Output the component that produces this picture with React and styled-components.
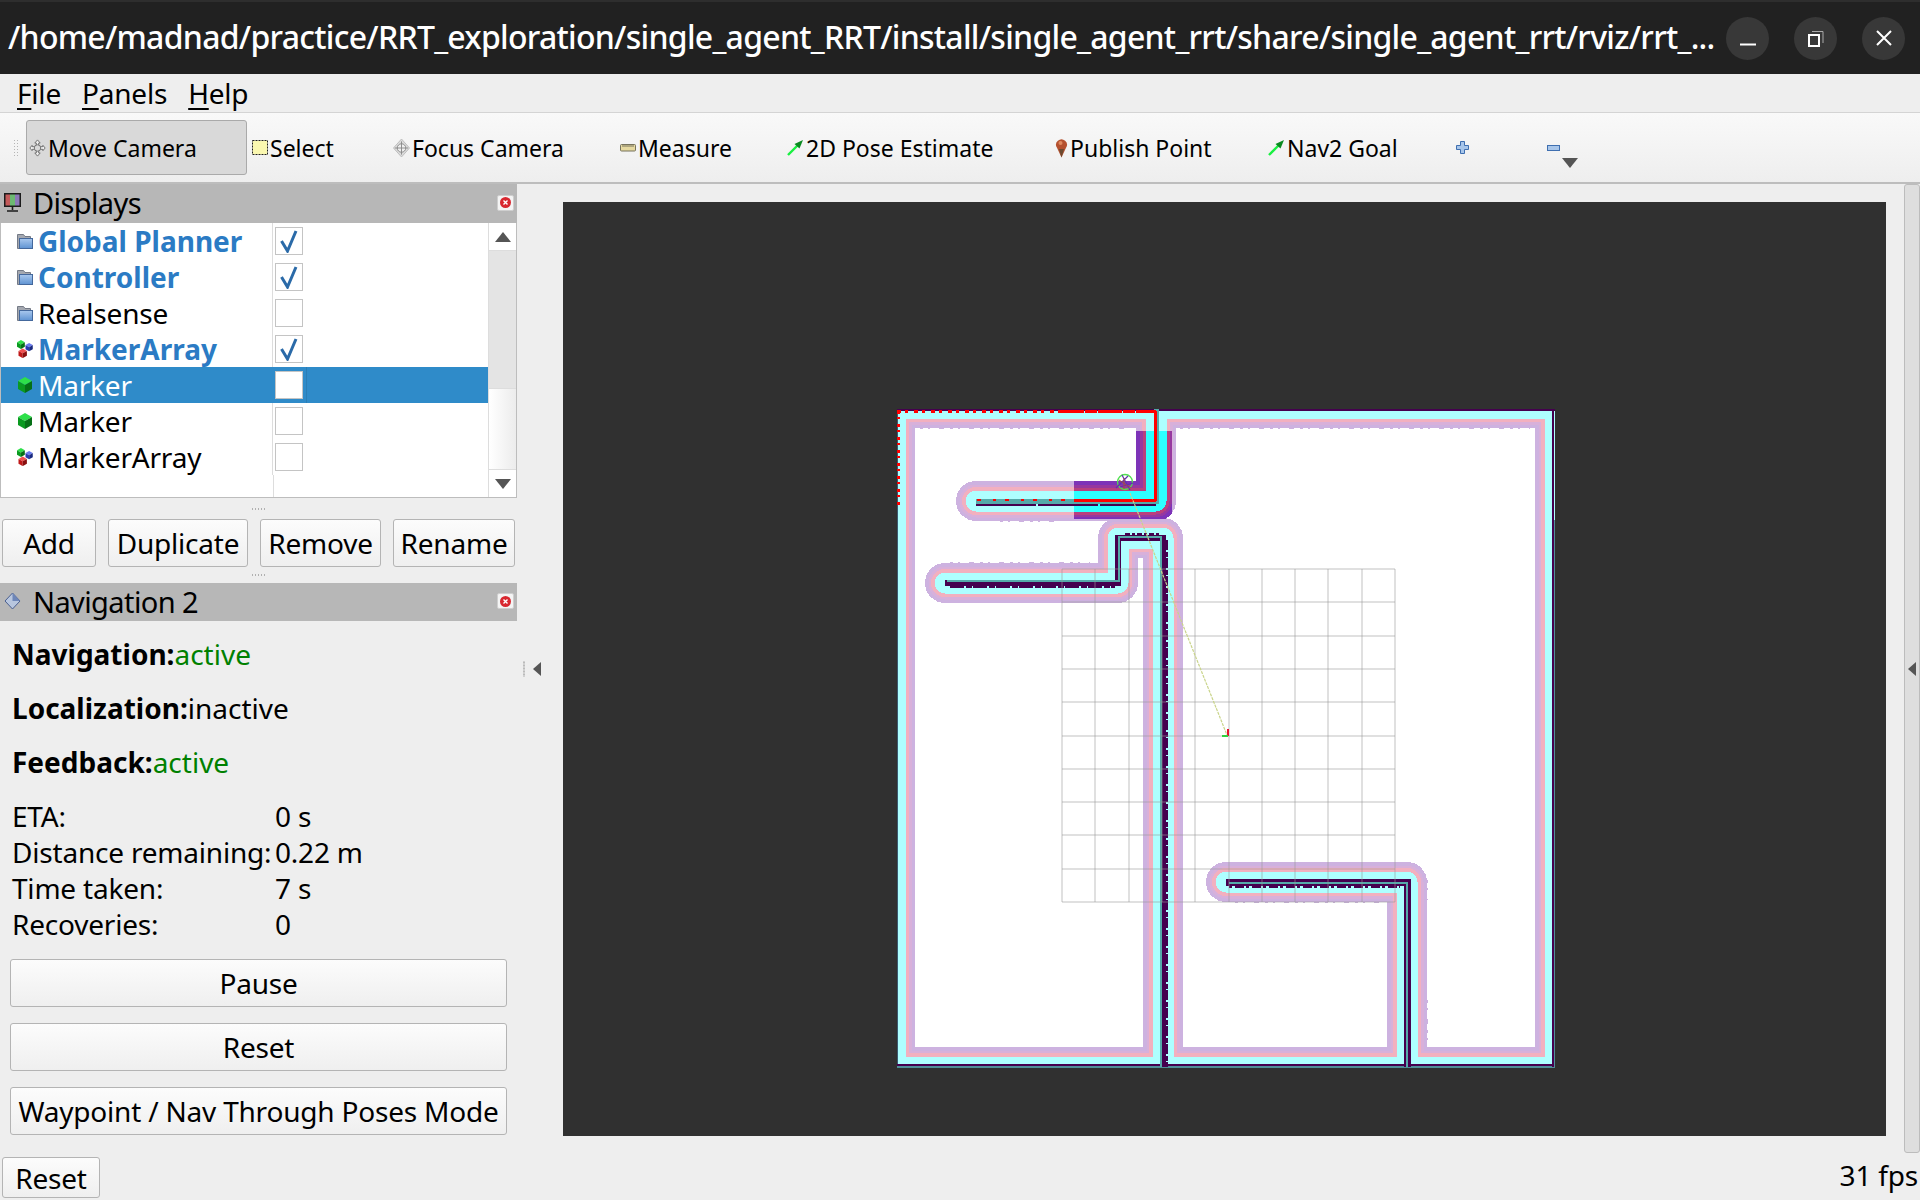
import React from "react";
import styled, { createGlobalStyle } from "styled-components";

const FONT = `"Noto Sans", "Open Sans", sans-serif`;

const Global = createGlobalStyle`
  html, body { margin: 0; padding: 0; background: #eeeeee; }
  body { font-family: ${FONT}; color: #000; overflow: hidden; }
  * { box-sizing: border-box; }
`;

const Window = styled.div`
  width: 1920px;
  height: 1200px;
  display: flex;
  flex-direction: column;
  background: #eeeeee;
  font-size: 28px;
  letter-spacing: -0.2px;
`;

const TitleBar = styled.div`
  height: 74px;
  flex: none;
  background: #212121;
  border-top: 2px solid #2e2e2e;
  display: flex;
  align-items: center;
  padding: 0 15px 0 8px;
`;
const TitleText = styled.div`
  flex: 1;
  margin-top: -4px;
  color: #fff;
  font-size: 32px;
  font-weight: 500;
  letter-spacing: -0.73px;
  white-space: nowrap;
`;
const WinButtons = styled.div`
  display: flex;
  gap: 25px;
`;
const WinButton = styled.div`
  width: 43px;
  height: 43px;
  border-radius: 50%;
  background: #383838;
  display: flex;
  align-items: center;
  justify-content: center;
`;

const MenuBar = styled.div`
  height: 39px;
  flex: none;
  display: flex;
  align-items: center;
  gap: 21px;
  padding: 0 16px 0 17px;
  border-bottom: 1px solid #d4d4d4;
`;
const MenuItem = styled.span`
  u { text-underline-offset: 4px; text-decoration-thickness: 2px; }
`;

const ToolBar = styled.div`
  height: 71px;
  flex: none;
  display: flex;
  align-items: center;
  padding-left: 13px;
  background: linear-gradient(#f9f9f9, #eeeeee);
  border-bottom: 2px solid #bdbdbd;
`;
const Grip = styled.div`
  width: 5px;
  height: 18px;
  margin-right: 8px;
  background-image: radial-gradient(#b5b5b5 0.8px, transparent 1px);
  background-size: 3px 3px;
`;
const Tool = styled.div`
  width: ${(p) => p.$w}px;
  height: 55px;
  flex: none;
  display: flex;
  align-items: center;
  gap: 2px;
  padding-left: ${(p) => (p.$active ? 2 : 4)}px;
  border: 1px solid ${(p) => (p.$active ? "#aaaaaa" : "transparent")};
  border-radius: 3px;
  background: ${(p) => (p.$active ? "#d9d9d9" : "transparent")};
  font-size: 23px;
  letter-spacing: 0;
  white-space: nowrap;
`;
const MoreArrow = styled.div`
  width: 0;
  height: 0;
  border-left: 8px solid transparent;
  border-right: 8px solid transparent;
  border-top: 10px solid #555;
  margin-top: 30px;
  margin-left: -4px;
`;

const Main = styled.div`
  flex: 1;
  min-height: 0;
  display: flex;
`;
const Dock = styled.div`
  width: 517px;
  flex: none;
  display: flex;
  flex-direction: column;
`;
const DockTitle = styled.div`
  height: ${(p) => p.$h}px;
  flex: none;
  background: #b7b7b7;
  display: flex;
  align-items: center;
  padding: 0 3px 2px 4px;
  font-size: 29px;
  letter-spacing: -0.6px;
`;
const DockTitleText = styled.span`
  flex: 1;
  margin-left: 12px;
`;
const CloseBtn = styled.div`
  width: 17px;
  height: 16px;
  background: #f4f4f4;
  border: 1px solid #cfcfcf;
  border-radius: 2px;
  display: flex;
  align-items: center;
  justify-content: center;
`;

const ListBox = styled.div`
  height: 275px;
  flex: none;
  display: flex;
  background: #fff;
  border: 1px solid #bdbdbd;
  border-top: none;
`;
const Rows = styled.div`
  flex: 1;
  position: relative;
`;
const Row = styled.div`
  height: 36px;
  display: flex;
  align-items: center;
  background: ${(p) => (p.$selected ? "#2f8bc9" : "transparent")};
  color: ${(p) => (p.$selected ? "#fff" : p.$on ? "#2b7bc4" : "#000")};
  font-weight: ${(p) => (p.$on ? 700 : 400)};
  letter-spacing: ${(p) => (p.$on ? "0" : "-0.2px")};
`;
const NameCell = styled.div`
  width: 272px;
  height: 100%;
  flex: none;
  display: flex;
  align-items: center;
  gap: 4px;
  padding-left: 15px;
  border-right: 1px solid ${(p) => (p.$selected ? "#2f8bc9" : "#dddddd")};
`;
const IconBox = styled.span`
  width: 18px;
  height: 18px;
  flex: none;
  display: flex;
  align-items: center;
  justify-content: center;
`;
const CheckCell = styled.div`
  width: 34px;
  height: 100%;
  flex: none;
  display: flex;
  align-items: center;
  padding-left: 2px;
  border-right: 1px solid ${(p) => (p.$selected ? "#2a7eb6" : "transparent")};
`;
const Check = styled.div`
  width: 28px;
  height: 28px;
  background: #fff;
  border: 1px solid #c4c4c4;
  display: flex;
  align-items: center;
  justify-content: center;
`;
const ColumnRule = styled.div`
  position: absolute;
  left: 272px;
  top: 252px;
  bottom: 0;
  width: 1px;
  background: #dddddd;
`;
const VScroll = styled.div`
  width: 28px;
  flex: none;
  display: flex;
  flex-direction: column;
  border-left: 1px solid #dddddd;
`;
const ScrollBtn = styled.div`
  height: 27px;
  flex: none;
  display: flex;
  align-items: center;
  justify-content: center;
  background: #fff;
`;
const ArrowUp = styled.div`
  width: 0;
  height: 0;
  border-left: 8px solid transparent;
  border-right: 8px solid transparent;
  border-${(p) => (p.$down ? "top" : "bottom")}: 10px solid #555;
`;
const ScrollThumb = styled.div`
  height: 139px;
  flex: none;
  background: #e4e4e4;
  border-top: 1px solid #dddddd;
  border-bottom: 1px solid #dddddd;
`;
const ScrollRest = styled.div`
  flex: 1;
  background: linear-gradient(90deg, #ffffff, #ececec);
  border-bottom: 1px solid #dddddd;
`;

const SplitDots = styled.div`
  height: ${(p) => p.$h}px;
  flex: none;
  display: flex;
  align-items: center;
  justify-content: center;
  &::after {
    content: "";
    width: 16px;
    height: 2px;
    background-image: radial-gradient(#b0b0b0 0.8px, transparent 1px);
    background-size: 3px 2px;
  }
`;
const ActionRow = styled.div`
  display: flex;
  padding: 0 2px 0 2px;
  gap: 12px;
`;
const Btn = styled.div`
  height: ${(p) => p.$h || 48}px;
  width: ${(p) => (p.$w ? `${p.$w}px` : "auto")};
  flex: none;
  display: flex;
  align-items: center;
  justify-content: center;
  white-space: nowrap;
  border: 1px solid #b4b4b4;
  border-radius: 3px;
  background: linear-gradient(#fcfcfc, #efefef);
`;

const NavBody = styled.div`
  flex: 1;
  padding: 6px 10px 0 12px;
  display: flex;
  flex-direction: column;
`;
const StatusLine = styled.div`
  height: 54px;
  display: flex;
  align-items: center;
  letter-spacing: 0;
  b { font-weight: 700; }
`;
const Active = styled.span`
  color: ${(p) => (p.$on ? "#008000" : "#000")};
`;
const InfoTable = styled.div`
  margin-top: 9px;
  display: grid;
  grid-template-columns: 263px 1fr;
  grid-auto-rows: 36px;
  align-items: center;
  white-space: nowrap;
`;
const BigButtons = styled.div`
  margin-top: 17px;
  margin-left: -2px;
  width: 497px;
  display: flex;
  flex-direction: column;
  gap: 16px;
`;

const ViewportColumn = styled.div`
  flex: 1;
  display: flex;
  align-items: center;
  min-width: 0;
`;
const Collapse = styled.div`
  width: 46px;
  flex: none;
  height: 100%;
  display: flex;
  align-items: center;
  padding-left: 6px;
  gap: 8px;
`;
const DotsV = styled.div`
  width: 2px;
  height: 16px;
  background-image: radial-gradient(#bbbbbb 0.7px, transparent 1px);
  background-size: 2px 3px;
`;
const ArrowLeft = styled.div`
  width: 0;
  height: 0;
  border-top: 7px solid transparent;
  border-bottom: 7px solid transparent;
  border-right: 8px solid #555;
`;
const Viewport = styled.div`
  width: 1323px;
  height: 934px;
  flex: none;
  margin-top: 18px;
  align-self: flex-start;
  background: #303030;
  svg { display: block; }
`;
const RightBar = styled.div`
  width: 16px;
  flex: none;
  margin-left: 18px;
  align-self: stretch;
  background: #dedede;
  border: 1px solid #bcbcbc;
  border-radius: 3px;
  display: flex;
  align-items: center;
  justify-content: center;
`;

const StatusBar = styled.div`
  height: 47px;
  flex: none;
  display: flex;
  align-items: flex-start;
  justify-content: space-between;
  padding: 4px 2px 0 2px;
`;
const Fps = styled.span`
  line-height: 36px;
`;

/* toolbar + tree icons */
const MoveIcon = () => (
  <svg width="17" height="18" viewBox="0 0 18 20" fill="none" stroke="#6a6a6a" strokeWidth="1">
    <path d="M9 1 L12 4.5 H10.3 V8.5 H15 V7 L17.5 10 L15 13 V11.5 H10.3 V15.5 H12 L9 19 L6 15.5 H7.7 V11.5 H3 V13 L.5 10 L3 7 V8.5 H7.7 V4.5 H6 Z" fill="#f0f0f0" />
    <circle cx="9" cy="10" r="3.6" fill="#d8d8d8" />
  </svg>
);
const SelectIcon = () => (
  <svg width="16" height="15" viewBox="0 0 16 15">
    <rect x=".5" y=".5" width="15" height="14" fill="#fbf8b0" stroke="#222" strokeDasharray="2 1" />
  </svg>
);
const FocusIcon = () => (
  <svg width="17" height="20" viewBox="0 0 18 20" fill="none" stroke="#8a8a8a">
    <path d="M9 .5 L17.5 10 L9 19.5 L.5 10 Z" fill="#dcdcdc" stroke="#bbb" />
    <circle cx="9" cy="10" r="4.5" fill="#eee" />
    <path d="M9 3 V17 M2 10 H16" />
  </svg>
);
const RulerIcon = () => (
  <svg width="16" height="8" viewBox="0 0 16 8">
    <rect x=".5" y=".5" width="15" height="6.5" rx="1" fill="#e6d9a0" stroke="#77735c" />
    <path d="M3 1v2M5 1v2M7 1v2M9 1v2M11 1v2M13 1v2" stroke="#77735c" />
  </svg>
);
const GreenArrow = () => (
  <svg width="17" height="16" viewBox="0 0 17 16">
    <path d="M1 15 L11 5" stroke="#18f040" strokeWidth="2.4" />
    <path d="M7.5 4 L16 0 L12.5 8.5 Z" fill="#0a8a20" />
  </svg>
);
const PinIcon = () => (
  <svg width="13" height="20" viewBox="0 0 12 20">
    <path d="M6 19.5 L1.6 10 A5.4 5.4 0 1 1 10.4 10 Z" fill="#b5512f" />
    <path d="M6 19.5 L3.5 11 H8.5 Z" fill="#6a4a30" />
    <circle cx="5" cy="5" r="2" fill="#e08a60" />
  </svg>
);
const PlusIcon = () => (
  <svg width="13" height="13" viewBox="0 0 13 13">
    <path d="M4.5 .5 H8.5 V4.5 H12.5 V8.5 H8.5 V12.5 H4.5 V8.5 H.5 V4.5 H4.5 Z" fill="#a8c6ea" stroke="#3f6fb0" />
  </svg>
);
const MinusIcon = () => (
  <svg width="13" height="6" viewBox="0 0 13 6">
    <rect x=".5" y=".5" width="12" height="5" fill="#a8c6ea" stroke="#3f6fb0" />
  </svg>
);
const MonitorIcon = () => (
  <svg width="17" height="19" viewBox="0 0 17 19">
    <rect x="0" y="0" width="17" height="14" fill="#1c1c1c" />
    <rect x="1.5" y="1.5" width="4.5" height="11" fill="#c45a5a" />
    <rect x="6" y="1.5" width="5" height="11" fill="#6cb872" />
    <rect x="11" y="1.5" width="4.5" height="11" fill="#8b78b8" />
    <path d="M8.5 14v3M3 18h11" stroke="#1c1c1c" strokeWidth="1.6" />
  </svg>
);
const FolderIcon = () => (
  <svg width="16" height="16" viewBox="0 0 16 16">
    <defs>
      <linearGradient id="fold" x1="0" x2="0" y1="0" y2="1">
        <stop offset="0" stopColor="#a9c8ee" />
        <stop offset="1" stopColor="#5f93d2" />
      </linearGradient>
    </defs>
    <path d="M.5 1.5 H6.5 L8 3.5 H13.5 V15.5 H.5 Z" fill="#a4a8b0" stroke="#747a86" />
    <rect x="2.5" y="5.5" width="13" height="10" fill="url(#fold)" stroke="#44689c" />
  </svg>
);
const Cube = ({ x = 0, y = 0, s = 1, top = "#2ee04a", l = "#0a9a20", r = "#067016" }) => (
  <g transform={`translate(${x} ${y}) scale(${s})`}>
    <path d="M7 0 L14 4 L7 8 L0 4 Z" fill={top} />
    <path d="M0 4 L7 8 V16 L0 12 Z" fill={l} />
    <path d="M14 4 L7 8 V16 L14 12 Z" fill={r} />
  </g>
);
const CubeIcon = () => (
  <svg width="14" height="16" viewBox="0 0 14 16"><Cube /></svg>
);
const CubesIcon = () => (
  <svg width="16" height="18" viewBox="0 0 16 18">
    <Cube x="0" y="0" s=".56" />
    <Cube x="8.5" y="3" s=".52" top="#6a7cf0" l="#2a3ab0" r="#1a2a80" />
    <Cube x="1.5" y="8.5" s=".6" top="#f05050" l="#c01818" r="#8a1010" />
  </svg>
);
const NavIcon = () => (
  <svg width="17" height="18" viewBox="0 0 17 18">
    <path d="M8.5 1 L16 9 L8.5 17 L1 9 Z" fill="#b8c6de" stroke="#4a5f90" />
    <path d="M8.5 1 L16 9 L8.5 9 Z" fill="#6e86b8" />
  </svg>
);
const RedClose = () => (
  <svg width="11" height="11" viewBox="0 0 11 11">
    <circle cx="5.5" cy="5.5" r="5.5" fill="#d8272f" />
    <path d="M3.5 3.5l4 4M7.5 3.5l-4 4" stroke="#fff" strokeWidth="1.4" />
  </svg>
);
const Tick = () => (
  <svg width="18" height="23" viewBox="0 0 18 23" fill="none">
    <path d="M1.5 11 L7.5 21 L16 1" stroke="#2a6aa8" strokeWidth="3" />
  </svg>
);

/* costmap drawing, coordinates follow the 1920 wide window */
const OUTER = "M895 408 H1555 V1067 H895 Z";
const WALL_A = "M1156 409 V501 H976";
const WALL_B = "M1163 1067 V538 H1118 V583 H945";
const WALL_C = "M1407 1067 V882 H1226";
const WALLS = [OUTER, WALL_A, WALL_B, WALL_C];

const LAYERS = [
  { w: 40, c: "#cdb2e0" },
  { w: 33, c: "#d8b0da" },
  { w: 28, c: "#f2b0bf" },
  { w: 21, c: "#aeffff" },
];
const LOCAL_LAYERS = [
  { w: 40, c: "#7d33b8" },
  { w: 32, c: "#96389f" },
  { w: 27, c: "#b8407e" },
  { w: 21, c: "#2dffff" },
];

// little notches on the inflation edge, the map is not perfectly clean
const EDGE_BUMPS = [
  "M920 428 H1130",
  "M1180 428 H1530",
  "M1235 902 H1385",
  "M950 563 H1090",
  "M1000 521 H1060",
  "M1427 1000 V1047",
  "M1427 880 V900",
];

const gridLines = Array.from({ length: 11 }, (_, i) => Math.round(i * 33.3));

const CostMap = () => (
  <svg width="1323" height="934" viewBox="563 202 1323 934">
    <defs>
      <clipPath id="mapClip"><rect x="897" y="409" width="658" height="659" /></clipPath>
      <clipPath id="localClip"><rect x="1074" y="431" width="98" height="88" /></clipPath>
    </defs>
    <rect x="897" y="409" width="658" height="659" fill="#fff" />
    <g clipPath="url(#mapClip)" shapeRendering="crispEdges" fill="none" strokeLinejoin="round" strokeLinecap="round">
      {LAYERS.map((l) => (
        <g key={l.c} stroke={l.c} strokeWidth={l.w}>
          {WALLS.map((d) => <path key={d} d={d} />)}
        </g>
      ))}
      <g strokeLinecap="butt" stroke="#cdb2e0" strokeWidth="2" strokeDasharray="3 5 2 9 5 6">
        {EDGE_BUMPS.map((d) => <path key={d} d={d} />)}
      </g>
      <g clipPath="url(#localClip)">
        {LOCAL_LAYERS.map((l) => (
          <path key={l.c} d={WALL_A} stroke={l.c} strokeWidth={l.w} />
        ))}
      </g>
      <g strokeLinecap="butt" strokeLinejoin="miter">
        {/* outer border */}
        <path d="M897.5 409 V1067" stroke="#3c5a70" strokeWidth="1" />
        <path d="M897 410 H1555" stroke="#45004f" strokeWidth="2" />
        <path d="M897 1065 H1555" stroke="#45004f" strokeWidth="2" />
        <path d="M897 1067 H1555" stroke="#4f8f98" strokeWidth="1.5" />
        <path d="M1553 409 V1067" stroke="#45004f" strokeWidth="1.5" />
        <path d="M1554.5 520 V1067" stroke="#4f8f98" strokeWidth="1" />
        {/* walls */}
        <path d={WALL_A} stroke="#55aaaa" strokeWidth="5" />
        <path d="M976 505 H1156" stroke="#45004f" strokeWidth="2" strokeDasharray="60 2" />
        <path d={WALL_B} stroke="#45004f" strokeWidth="6" />
        <path d={WALL_C} stroke="#45004f" strokeWidth="7" />
        <path d="M1161 1067 V537 H1119 V581 H947" stroke="#55aaaa" strokeWidth="1.5" />
        <path d="M1407 1067 V883 H1229" stroke="#55aaaa" strokeWidth="1.5" />
        <path d="M1229 887 H1400" stroke="#45004f" strokeWidth="2" strokeDasharray="3 3 9 2" />
        <path d="M1166.5 540 V1067" stroke="#45004f" strokeWidth="2" strokeDasharray="10 2 5 1" />
        <path d="M950 586.5 H1115" stroke="#45004f" strokeWidth="2" strokeDasharray="14 2 6 1" />
        <path d="M1125 534 H1160" stroke="#45004f" strokeWidth="2" strokeDasharray="5 2 3 2" />
        {/* laser scan */}
        <path d="M897 411 H1060" stroke="#ff0000" strokeWidth="3" strokeDasharray="4 4 3 6" />
        <path d="M1060 411 H1156" stroke="#ff0000" strokeWidth="3" strokeDasharray="24 1 12 1" />
        <path d="M898 411 V506" stroke="#ff0000" strokeWidth="3" strokeDasharray="3 3 2 5" />
        <path d="M1155 411 V501" stroke="#ff0000" strokeWidth="3" />
        <path d="M1074 500 H1156" stroke="#ff0000" strokeWidth="3" />
        <path d="M977 500 H1074" stroke="#ff0000" strokeWidth="2.5" strokeDasharray="4 12 3 9" />
      </g>
    </g>
    <g stroke="#999999" strokeOpacity=".3" strokeWidth="2" shapeRendering="crispEdges">
      {gridLines.map((v) => <path key={`v${v}`} d={`M${1062 + v} 569 V902`} />)}
      {gridLines.map((v) => <path key={`h${v}`} d={`M1062 ${569 + v} H1395`} />)}
    </g>
    <path d="M1130 493 L1227 735" stroke="#c9d48a" strokeWidth="1.2" strokeDasharray="3 1" />
    <path d="M1228 736 V729" stroke="#e81030" strokeWidth="2" />
    <path d="M1228 736 H1222" stroke="#30d040" strokeWidth="2" />
    <circle cx="1125" cy="482" r="7.5" fill="none" stroke="#50e050" strokeWidth="1.3" />
    <path d="M1116 488 L1128 476 M1122 475 L1130 490 M1120 487 L1133 483" stroke="#6030b0" strokeWidth="1.2" />
    <path d="M1119 480 L1131 488 M1124 478 L1124 489" stroke="#a05040" strokeWidth="1" />
  </svg>
);

const DISPLAYS = [
  { name: "Global Planner", icon: <FolderIcon />, on: true },
  { name: "Controller", icon: <FolderIcon />, on: true },
  { name: "Realsense", icon: <FolderIcon /> },
  { name: "MarkerArray", icon: <CubesIcon />, on: true },
  { name: "Marker", icon: <CubeIcon />, selected: true },
  { name: "Marker", icon: <CubeIcon /> },
  { name: "MarkerArray", icon: <CubesIcon /> },
];

const TOOLS = [
  { label: "Move Camera", icon: <MoveIcon />, w: 221, active: true },
  { label: "Select", icon: <SelectIcon />, w: 141 },
  { label: "Focus Camera", icon: <FocusIcon />, w: 227 },
  { label: "Measure", icon: <RulerIcon />, w: 167 },
  { label: "2D Pose Estimate", icon: <GreenArrow />, w: 268 },
  { label: "Publish Point", icon: <PinIcon />, w: 213 },
  { label: "Nav2 Goal", icon: <GreenArrow />, w: 188 },
  { label: "", icon: <PlusIcon />, w: 91 },
  { label: "", icon: <MinusIcon />, w: 24 },
];

export default function App() {
  return (
    <Window>
      <Global />
      <TitleBar>
        <TitleText>/home/madnad/practice/RRT_exploration/single_agent_RRT/install/single_agent_rrt/share/single_agent_rrt/rviz/rrt_...</TitleText>
        <WinButtons>
          <WinButton>
            <svg width="16" height="16" viewBox="0 0 16 16"><path d="M0 14.5H16" stroke="#fff" strokeWidth="2" /></svg>
          </WinButton>
          <WinButton>
            <svg width="16" height="18" viewBox="0 0 16 18" fill="none" stroke="#fff">
              <rect x="1" y="6" width="10" height="11" strokeWidth="2" />
              <path d="M4 2.5H15V14" strokeWidth="1" stroke="#aaa" />
            </svg>
          </WinButton>
          <WinButton>
            <svg width="16" height="16" viewBox="0 0 16 16"><path d="M1 1L15 15M15 1L1 15" stroke="#fff" strokeWidth="2" /></svg>
          </WinButton>
        </WinButtons>
      </TitleBar>

      <MenuBar>
        <MenuItem><u>F</u>ile</MenuItem>
        <MenuItem><u>P</u>anels</MenuItem>
        <MenuItem><u>H</u>elp</MenuItem>
      </MenuBar>

      <ToolBar>
        <Grip />
        {TOOLS.map((t) => (
          <Tool key={t.label || t.w} $w={t.w} $active={t.active}>
            {t.icon}
            {t.label}
          </Tool>
        ))}
        <MoreArrow />
      </ToolBar>

      <Main>
        <Dock>
          <DockTitle $h={39}>
            <MonitorIcon />
            <DockTitleText>Displays</DockTitleText>
            <CloseBtn><RedClose /></CloseBtn>
          </DockTitle>
          <ListBox>
            <Rows>
              {DISPLAYS.map((d, i) => (
                <Row key={i} $on={d.on} $selected={d.selected}>
                  <NameCell $selected={d.selected}>
                    <IconBox>{d.icon}</IconBox>
                    {d.name}
                  </NameCell>
                  <CheckCell $selected={d.selected}>
                    <Check>{d.on && <Tick />}</Check>
                  </CheckCell>
                </Row>
              ))}
              <ColumnRule />
            </Rows>
            <VScroll>
              <ScrollBtn><ArrowUp /></ScrollBtn>
              <ScrollThumb />
              <ScrollRest />
              <ScrollBtn><ArrowUp $down /></ScrollBtn>
            </VScroll>
          </ListBox>
          <SplitDots $h={21} />
          <ActionRow>
            <Btn $w={94}>Add</Btn>
            <Btn $w={140}>Duplicate</Btn>
            <Btn $w={121}>Remove</Btn>
            <Btn $w={122}>Rename</Btn>
          </ActionRow>
          <SplitDots $h={16} />
          <DockTitle $h={38}>
            <NavIcon />
            <DockTitleText>Navigation 2</DockTitleText>
            <CloseBtn><RedClose /></CloseBtn>
          </DockTitle>
          <NavBody>
            <StatusLine><b>Navigation:</b><Active $on>active</Active></StatusLine>
            <StatusLine><b>Localization:</b><Active>inactive</Active></StatusLine>
            <StatusLine><b>Feedback:</b><Active $on>active</Active></StatusLine>
            <InfoTable>
              <span>ETA:</span><span>0 s</span>
              <span>Distance remaining:</span><span>0.22 m</span>
              <span>Time taken:</span><span>7 s</span>
              <span>Recoveries:</span><span>0</span>
            </InfoTable>
            <BigButtons>
              <Btn>Pause</Btn>
              <Btn>Reset</Btn>
              <Btn>Waypoint / Nav Through Poses Mode</Btn>
            </BigButtons>
          </NavBody>
        </Dock>
        <ViewportColumn>
          <Collapse>
            <DotsV />
            <ArrowLeft />
          </Collapse>
          <Viewport><CostMap /></Viewport>
          <RightBar><ArrowLeft /></RightBar>
        </ViewportColumn>
      </Main>

      <StatusBar>
        <Btn $w={98} $h={41}>Reset</Btn>
        <Fps>31 fps</Fps>
      </StatusBar>
    </Window>
  );
}
